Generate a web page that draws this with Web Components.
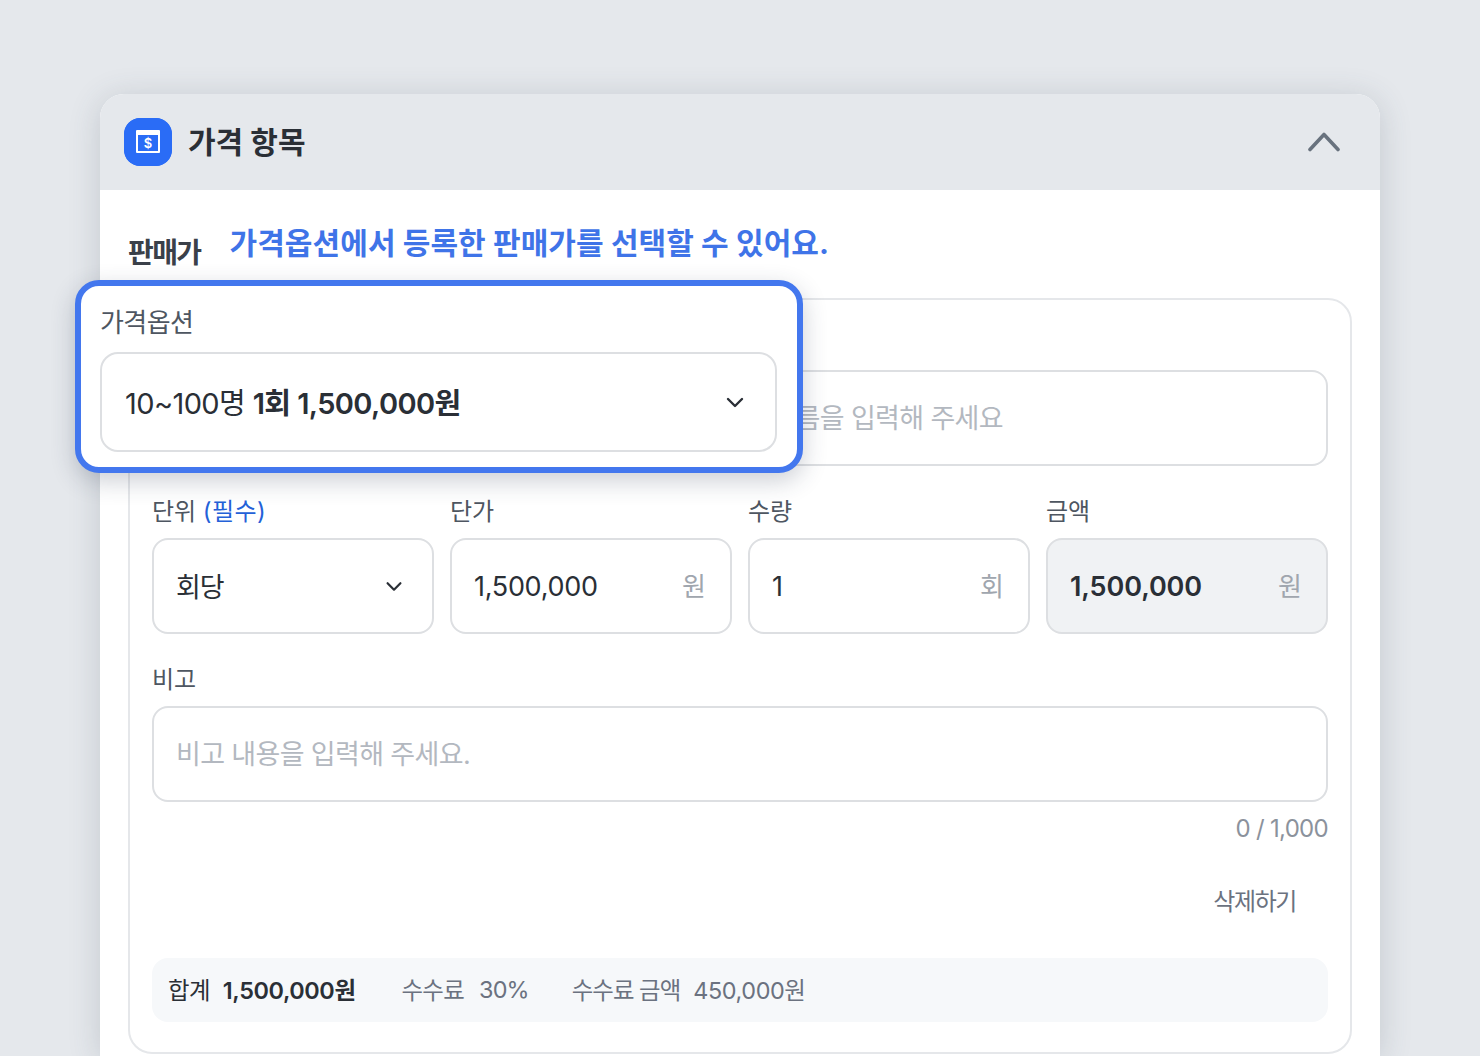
<!DOCTYPE html>
<html lang="ko"><head><meta charset="utf-8">
<style>
html,body{margin:0;padding:0}
body{width:1480px;height:1056px;overflow:hidden;background:#e5e8ec;font-family:Inter,"Noto Sans CJK KR",sans-serif;color:#22262c}
</style></head><body>
<price-card></price-card>
<script>
const base=`*{box-sizing:border-box}`;
function def(name,html){customElements.define(name,class extends HTMLElement{constructor(){super();this.attachShadow({mode:'open'}).innerHTML=html(this)}})}
def('ui-field',h=>`<style>${base}
:host{display:flex;flex-direction:column;min-width:0;flex:1}
.l{font-size:24px;line-height:36px;letter-spacing:-.1px;color:#4e5661;height:32px;margin-bottom:12px;white-space:nowrap}
</style><div class="l"><slot name="label"></slot></div><slot></slot>`);
def('ui-input',h=>{const dis=h.hasAttribute('disabled');const ph=h.hasAttribute('placeholder');const sel=h.hasAttribute('select');const unit=h.getAttribute('unit');return `<style>${base}
:host{display:flex;align-items:center;height:96px;border:2px solid #dddfe2;border-radius:16px;padding:0 ${sel?'27px':'24px'} 0 22px;background:${dis?'#f0f2f4':'#fff'};font-size:27px;letter-spacing:${dis?'-.1px':unit?'-.3px':ph?'-.65px':'-1px'};white-space:nowrap;color:${ph?'#b3b8c0':'#2a2f36'};font-weight:${dis?600:400}}
.t{flex:1;min-width:0;overflow:hidden;${unit?'padding-top:1px;':ph?'padding-bottom:3px;':'padding-bottom:2px;'}}
.u{color:#a0a6ae;font-weight:400;font-size:26px;letter-spacing:0;padding-bottom:3px}
svg{display:block}
</style><span class="t"><slot></slot></span>${unit?`<span class="u">${unit}</span>`:''}${sel?`<svg width="22" height="22" viewBox="0 0 24 24" fill="none" stroke="#2a2f36" stroke-width="2.4" stroke-linecap="round" stroke-linejoin="round"><path d="M5 9l7 7 7-7"/></svg>`:''}`});
def('option-pop',h=>`<style>${base}
:host{position:absolute;left:-25px;top:186px;width:728px;height:193px;background:#fff;border:6px solid #4377ee;border-radius:24px;padding:20px 20px 0 19px;box-shadow:0 8px 24px rgba(40,55,80,.24);display:block}
.l{font-size:26px;line-height:34px;letter-spacing:-.6px;color:#4e5661;height:34px;margin-bottom:12px}
.s{display:flex;align-items:center;height:100px;border:2px solid #dddfe2;border-radius:18px;padding:0 28px 0 23px;font-size:29px;letter-spacing:-.6px;color:#2a2f36}
.s span{flex:1;padding-bottom:2px}::slotted(strong){font-weight:600}
</style><div class="l">가격옵션</div><div class="s"><span><slot></slot></span><svg width="24" height="24" viewBox="0 0 24 24" fill="none" stroke="#2a2f36" stroke-width="2.4" stroke-linecap="round" stroke-linejoin="round"><path d="M5 9l7 7 7-7"/></svg></div>`);
def('price-card',h=>`<style>${base}
:host{position:absolute;left:100px;top:94px;width:1280px;height:962px;display:block}
.card{height:100%;background:#fff;border-radius:24px 24px 0 0;box-shadow:0 4px 32px rgba(60,75,90,.2);overflow:hidden}
.head{height:96px;background:#e5e8ec;display:flex;align-items:center;padding:0 36px 0 24px;gap:16px}
.ic{width:48px;height:48px;border-radius:16px;background:#2a6cf6;display:block}
h2{margin:0;flex:1;font-size:30px;line-height:42px;font-weight:700;letter-spacing:0;color:#2a2f36}
.body{padding:32px 28px 0}
.top{display:flex;align-items:center;gap:29px;height:44px}
.top b{font-size:28px;font-weight:700;letter-spacing:-1.6px;color:#3a4049;position:relative;top:7px}
.top span{font-size:30px;font-weight:700;letter-spacing:.08px;color:#3f74e8;position:relative;top:-3px}
.box{border:2px solid #e5e7ea;border-radius:24px;height:756px;padding:70px 22px 0;margin-top:32px}
.name{height:96px;border:2px solid #dddfe2;border-radius:16px;display:flex;align-items:center;justify-content:flex-end;padding:0 323px 3px 0;font-size:27px;color:#b3b8c0;letter-spacing:-.65px;white-space:nowrap;overflow:hidden}
.row{display:flex;gap:16px;margin-top:28px}
.memo{margin-top:28px}
.req{color:#2461d8;letter-spacing:.5px}
.count{text-align:right;font-size:24px;line-height:32px;letter-spacing:-.7px;color:#8b929c;margin-top:11px}
.del{text-align:right;font-size:24px;line-height:32px;letter-spacing:-1.4px;color:#6b7280;margin-top:41px;padding-right:32px}
.sum{margin-top:40px;height:64px;background:#f6f8fa;border-radius:16px;display:flex;align-items:center;padding:0 16px 2px;font-size:23.4px;letter-spacing:-.4px;color:#6b7280;white-space:nowrap}
.sum i{font-style:normal;margin-right:15px;letter-spacing:-.7px}.sum .k{color:#2a2f36;margin-right:13px;letter-spacing:-.6px}.sum strong{color:#2a2f36;font-weight:600;margin-right:46px}.sum .v{margin-right:43px;letter-spacing:-.8px}.sum .m{margin-right:13px;letter-spacing:-.95px}
</style>
<div class="card"><div class="head"><svg class="ic" viewBox="0 0 48 48" fill="none"><rect width="48" height="48" rx="16" fill="#2a6cf6"/><rect x="12" y="12" width="24" height="23" rx="1" fill="#fff"/><rect x="14" y="17" width="20" height="16" fill="#2a6cf6"/><text x="24" y="30" font-size="13" font-weight="600" font-family="Inter" text-anchor="middle" fill="#fff">$</text></svg><h2>가격 항목</h2>
<svg width="36" height="36" viewBox="0 0 36 36" fill="none" stroke="#68727e" stroke-width="3.6" stroke-linecap="round" stroke-linejoin="round"><path d="M2 25.500L16 10.500l14 15"/></svg></div>
<div class="body"><div class="top"><b>판매가</b><span>가격옵션에서 등록한 판매가를 선택할 수 있어요.</span></div>
<div class="box"><div class="name">이름을 입력해 주세요</div>
<div class="row"><ui-field><span slot="label">단위 <span class="req">(필수)</span></span><ui-input select>회당</ui-input></ui-field>
<ui-field><span slot="label">단가</span><ui-input unit="원">1,500,000</ui-input></ui-field>
<ui-field><span slot="label">수량</span><ui-input unit="회">1</ui-input></ui-field>
<ui-field><span slot="label">금액</span><ui-input unit="원" disabled>1,500,000</ui-input></ui-field></div>
<div class="memo"><ui-field><span slot="label">비고</span><ui-input placeholder>비고 내용을 입력해 주세요.</ui-input></ui-field></div>
<div class="count">0 / 1,000</div><div class="del">삭제하기</div>
<div class="sum"><i class="k">합계</i><strong>1,500,000원</strong><i>수수료</i><span class="v">30%</span><i class="m">수수료 금액</i><span>450,000원</span></div>
</div></div></div><option-pop>10~100명 <strong>1회 1,500,000원</strong></option-pop>`);
</script></body></html>
